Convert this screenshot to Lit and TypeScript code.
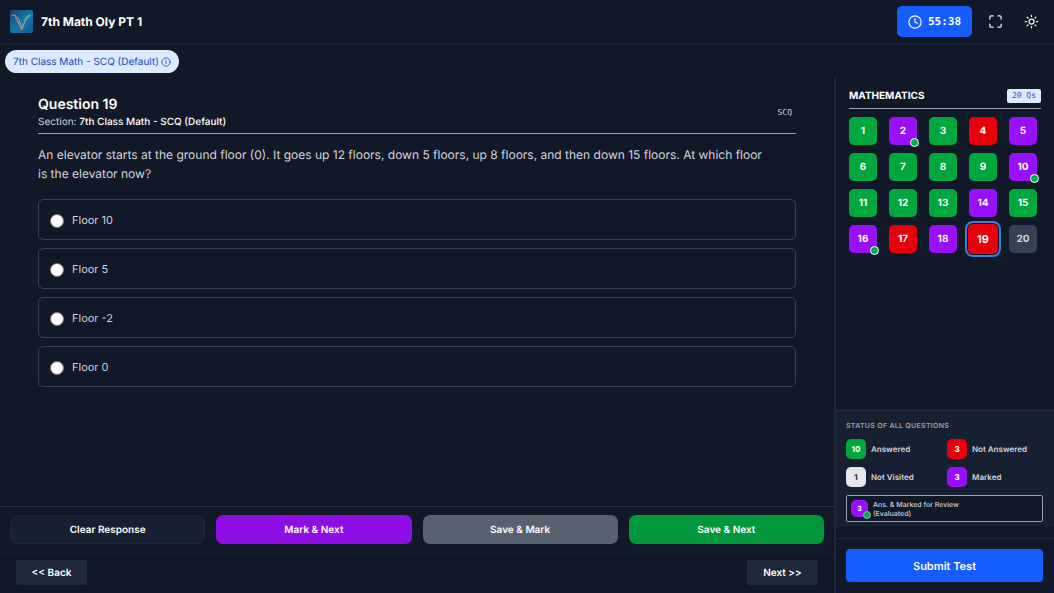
import { LitElement, html, css, nothing } from "lit";
import { customElement, property, state } from "lit/decorators.js";
import { classMap } from "lit/directives/class-map.js";

type Status = "answered" | "skipped" | "marked" | "both" | "unseen";

const STATUSES: Status[] = [
  "answered", "both", "answered", "skipped", "marked",
  "answered", "answered", "answered", "answered", "both",
  "answered", "answered", "answered", "marked", "answered",
  "both", "skipped", "marked", "skipped", "unseen",
];

const OPTIONS = ["Floor 10", "Floor 5", "Floor -2", "Floor 0"];

const controls = css`
  :host {
    box-sizing: border-box;
  }
  *,
  *::before,
  *::after {
    box-sizing: border-box;
  }
  button {
    font: inherit;
    color: inherit;
    text-rendering: inherit;
    border: 0;
    padding: 0;
    margin: 0;
    background: none;
    cursor: pointer;
  }
  h1, h2, h3, p, ul {
    margin: 0;
    padding: 0;
    font-weight: inherit;
    font-size: inherit;
    list-style: none;
  }
  svg {
    display: block;
    fill: none;
    stroke: currentColor;
    stroke-width: 2;
    stroke-linecap: round;
    stroke-linejoin: round;
  }
`;

@customElement("exam-header")
class ExamHeader extends LitElement {
  @property() heading = "";
  @property() time = "";

  static styles = [
    controls,
    css`
      :host {
        display: flex;
        align-items: center;
        height: 44px;
        padding: 0 14px 0 10px;
        border-bottom: 1px solid #1a2332;
      }
      .logo {
        width: 23px;
        height: 23px;
        margin-right: 8px;
      }
      h1 {
        flex: 1;
        font-size: 12px;
        font-weight: 700;
        color: #ffffff;
      }
      .tools {
        display: flex;
        align-items: center;
      }
      .timer {
        display: flex;
        align-items: center;
        justify-content: center;
        gap: 6px;
        width: 75px;
        height: 31px;
        border-radius: 5px;
        background: #155dfc;
        color: #ffffff;
        font: 700 11px "DejaVu Sans Mono", monospace;
      }
      .icon {
        display: grid;
        place-items: center;
        width: 36px;
        height: 30px;
        color: #f3f4f6;
      }
      .icons {
        display: flex;
        margin: 0 -9px 0 5px;
      }
    `,
  ];

  render() {
    return html`
      <svg class="logo" viewBox="0 0 24 24" aria-hidden="true">
        <defs>
          <linearGradient id="tile" x1="0" y1="0" x2="1" y2="1">
            <stop offset="0" stop-color="#12466f" />
            <stop offset="0.55" stop-color="#1678ae" />
            <stop offset="1" stop-color="#0c5688" />
          </linearGradient>
        </defs>
        <rect width="24" height="24" rx="2" fill="url(#tile)" stroke="none" />
        <path d="M2 5.500h3l6.600 14.500" stroke="#b99a6c" stroke-width="1" />
        <path d="M5.500 5l6.800 15" stroke="#c46a84" stroke-width="1" />
        <path d="M8.500 8l3.800 9" stroke="#7fb0c6" stroke-width="0.9" />
        <path d="M12.300 20L17 8.500l4.500-3" stroke="#35a9c4" stroke-width="1.600" />
        <path d="M12 21l3.600-9.500 3.200-4" stroke="#d08a60" stroke-width="1" />
        <path d="M15 11.500l2-4 3.500-2.500" stroke="#3fae9c" stroke-width="1.400" />
      </svg>
      <h1>${this.heading}</h1>
      <div class="tools">
        <div class="timer" role="timer">
          <svg width="14" height="14" viewBox="0 0 24 24" aria-hidden="true">
            <circle cx="12" cy="12" r="10.500" />
            <path d="M12 6v6l4 2" />
          </svg>
          <span>${this.time}</span>
        </div>
        <div class="icons">
          <button class="icon" aria-label="Full screen">
            <svg width="15" height="15" viewBox="0 0 24 24" aria-hidden="true">
              <path d="M8 3H5a2 2 0 0 0-2 2v3M21 8V5a2 2 0 0 0-2-2h-3M3 16v3a2 2 0 0 0 2 2h3M16 21h3a2 2 0 0 0 2-2v-3" />
            </svg>
          </button>
          <button class="icon" aria-label="Light theme">
            <svg width="15" height="15" viewBox="0 0 24 24" aria-hidden="true">
              <circle cx="12" cy="12" r="4" />
              <path d="M12 2v2M12 20v2M4.930 4.930l1.410 1.410M17.660 17.660l1.410 1.410M2 12h2M20 12h2M6.340 17.660l-1.410 1.410M19.070 4.930l-1.410 1.410" />
            </svg>
          </button>
        </div>
      </div>
    `;
  }
}

@customElement("question-view")
class QuestionView extends LitElement {
  @property({ type: Number }) number = 0;
  @property() section = "";
  @property() text = "";
  @property({ type: Array }) options: string[] = [];

  static styles = [
    controls,
    css`
      :host {
        display: block;
        padding: 16px 38px;
      }
      header {
        display: flex;
        justify-content: space-between;
        align-items: center;
        height: 40px;
        border-bottom: 1px solid #99a1af;
      }
      h2 {
        font-size: 14px;
        line-height: 20px;
        font-weight: 600;
        color: #ffffff;
      }
      .section {
        font-size: 10px;
        line-height: 14px;
        color: #d1d5dc;
        padding-bottom: 4px;
      }
      .section strong {
        font-weight: 500;
        color: #ffffff;
      }
      .kind {
        padding: 0 4px 2px;
        font: 8px "DejaVu Sans Mono", monospace;
        color: #d1d5dc;
      }
      fieldset {
        border: 0;
        margin: 0;
        padding: 0;
        min-width: 0;
      }
      legend {
        padding: 11px 30px 16px 0;
        font-size: 12px;
        line-height: 19px;
        color: #d1d5dc;
      }
      .options {
        display: grid;
        gap: 8px;
      }
      label {
        display: flex;
        align-items: center;
        gap: 8px;
        height: 41px;
        padding: 0 11px;
        border: 1px solid #364153;
        border-radius: 5px;
        font-size: 11px;
        color: #d1d5dc;
        cursor: pointer;
      }
      input {
        appearance: none;
        width: 14px;
        height: 14px;
        margin: 3px 0 0;
        border: 1px solid #767676;
        border-radius: 50%;
        background: #ffffff;
      }
      input:checked {
        border: 4px solid #155dfc;
      }
    `,
  ];

  render() {
    return html`
      <header>
        <div>
          <h2>Question ${this.number}</h2>
          <p class="section">Section: <strong>${this.section}</strong></p>
        </div>
        <span class="kind">SCQ</span>
      </header>
      <fieldset>
        <legend>${this.text}</legend>
        <div class="options">
          ${this.options.map(
            (option, i) => html`
              <label for="option-${i}">
                <input type="radio" name="answer" id="option-${i}" />
                <span>${option}</span>
              </label>
            `
          )}
        </div>
      </fieldset>
    `;
  }
}

@customElement("exam-actions")
class ExamActions extends LitElement {
  static styles = [
    controls,
    css`
      :host {
        display: block;
        border-top: 1px solid #27303f;
        color: #ffffff;
      }
      .main {
        display: grid;
        grid-template-columns: repeat(4, 1fr);
        gap: 11px;
        padding: 8px 10px;
        font-size: 10px;
        font-weight: 600;
      }
      .main button {
        height: 29px;
        border-radius: 7px;
      }
      .main .clear {
        background: #172030;
        border: 1px solid #1e2939;
      }
      .main .mark {
        background: #8d0fe6;
      }
      .main .save-mark {
        background: #586170;
      }
      .main .save {
        background: #02973b;
      }
      .nav {
        display: flex;
        justify-content: space-between;
        padding: 7px 16px 8px;
        border-top: 1px solid #161f2e;
        font-size: 10px;
        font-weight: 600;
      }
      .nav button {
        width: 71px;
        height: 25px;
        border-radius: 2px;
        background: #1e2939;
      }
    `,
  ];

  render() {
    return html`
      <div class="main">
        <button class="clear">Clear Response</button>
        <button class="mark">Mark &amp; Next</button>
        <button class="save-mark">Save &amp; Mark</button>
        <button class="save">Save &amp; Next</button>
      </div>
      <nav class="nav">
        <button>&lt;&lt; Back</button>
        <button>Next &gt;&gt;</button>
      </nav>
    `;
  }
}

@customElement("question-palette")
class QuestionPalette extends LitElement {
  @property({ type: Array }) statuses: Status[] = [];
  @property({ type: Number }) current = 0;

  static styles = [
    controls,
    css`
      :host {
        display: flex;
        flex-direction: column;
        border-left: 2px solid #1e2939;
        color: #ffffff;
      }
      .list {
        flex: 1;
        min-height: 0;
        padding: 10px 13px 0;
      }
      .title {
        display: flex;
        align-items: center;
        justify-content: space-between;
        padding-bottom: 4px;
        margin-bottom: 8px;
        border-bottom: 1px solid #99a1af;
      }
      .title h2 {
        font-size: 10px;
        line-height: 16px;
        font-weight: 700;
      }
      .count {
        padding: 0 5px;
        border-radius: 2px;
        background: #dbeafe;
        color: #3650a8;
        font: 8px/14px "DejaVu Sans Mono", monospace;
      }
      .grid {
        display: grid;
        grid-template-columns: repeat(5, 1fr);
        gap: 8px;
      }
      .tile {
        position: relative;
        display: grid;
        place-items: center;
        width: 28px;
        height: 28px;
        border-radius: 5px;
        font-size: 10px;
        font-weight: 700;
      }
      .answered {
        background: #00a63e;
      }
      .skipped {
        background: #e7000b;
      }
      .marked,
      .both {
        background: #9810fa;
      }
      .unseen {
        background: #364153;
        color: #d1d5dc;
      }
      .current {
        width: 30px;
        height: 30px;
        margin: -1px;
        font-size: 11px;
        outline: 2px solid #3b7dd8;
        outline-offset: 1px;
      }
      .both::after {
        content: "";
        position: absolute;
        right: -2px;
        bottom: -2px;
        width: 9px;
        height: 9px;
        border: 1px solid #ffffff;
        border-radius: 50%;
        background: #00b050;
      }
      .status {
        padding: 9px 11px 5px 10px;
        border-top: 1px solid #27303f;
        background: #172030;
      }
      .status h3 {
        font-size: 7px;
        line-height: 12px;
        font-weight: 600;
        letter-spacing: 0.3px;
        color: #99a1af;
        margin-bottom: 7px;
      }
      .legend {
        display: grid;
        grid-template-columns: 1fr 1fr;
        gap: 8px 5px;
        margin-bottom: 8px;
      }
      .legend li {
        display: flex;
        align-items: center;
        gap: 5px;
        font-size: 8px;
        font-weight: 600;
        color: #d1d5dc;
      }
      .badge {
        position: relative;
        display: grid;
        place-items: center;
        flex: none;
        width: 20px;
        height: 20px;
        border-radius: 5px;
        font-size: 8px;
        font-weight: 700;
        color: #ffffff;
      }
      .badge.blank {
        background: #e5e7eb;
        color: #1e2939;
      }
      .review {
        display: flex;
        align-items: center;
        gap: 5px;
        height: 27px;
        padding: 0 4px;
        border: 1px solid #99a1af;
        border-radius: 2px;
        background: #111827;
        font-size: 7px;
        line-height: 9px;
        font-weight: 500;
        color: #d1d5dc;
      }
      .review .badge {
        width: 17px;
        height: 17px;
        font-size: 7px;
      }
      .review .badge::after {
        right: -3px;
        width: 8px;
        height: 8px;
        border-color: #99a1af;
      }
      .submit {
        margin-top: 11px;
        padding: 10px 11px 11px 10px;
        border-top: 1px solid #1e2939;
      }
      .submit button {
        width: 100%;
        height: 33px;
        border-radius: 4px;
        background: #155dfc;
        font-size: 11px;
        font-weight: 600;
      }
    `,
  ];

  render() {
    return html`
      <section class="list">
        <div class="title">
          <h2>MATHEMATICS</h2>
          <span class="count">${this.statuses.length} Qs</span>
        </div>
        <div class="grid">
          ${this.statuses.map((status, i) => {
            const isCurrent = i + 1 === this.current;
            return html`
              <button
                class=${classMap({ tile: true, [status]: true, current: isCurrent })}
                aria-current=${isCurrent ? "true" : nothing}
                @click=${() => this.dispatchEvent(new CustomEvent("pick", { detail: i + 1 }))}
              >${i + 1}</button>
            `;
          })}
        </div>
      </section>
      <section class="status">
        <h3>STATUS OF ALL QUESTIONS</h3>
        <ul class="legend">
          <li><span class="badge answered">10</span>Answered</li>
          <li><span class="badge skipped">3</span>Not Answered</li>
          <li><span class="badge blank">1</span>Not Visited</li>
          <li><span class="badge marked">3</span>Marked</li>
        </ul>
        <div class="review">
          <span class="badge both">3</span>
          <span>Ans. &amp; Marked for Review<br />(Evaluated)</span>
        </div>
      </section>
      <div class="submit"><button>Submit Test</button></div>
    `;
  }
}

@customElement("app-root")
class AppRoot extends LitElement {
  @state() private current = 19;

  static styles = [
    controls,
    css`
      :host {
        display: flex;
        flex-direction: column;
        min-height: 100vh;
        background: #111827;
        font-family: Inter, "Liberation Sans", sans-serif;
        text-rendering: geometricPrecision;
      }
      .sections {
        display: flex;
        padding: 6px 5px 5px;
      }
      .section {
        display: flex;
        align-items: center;
        gap: 2px;
        height: 23px;
        padding: 0 8px;
        border-radius: 12px;
        background: #dbeafe;
        color: #1d49b8;
        font-size: 10px;
        font-weight: 400;
      }
      .body {
        flex: 1;
        display: grid;
        grid-template-columns: minmax(0, 1fr) 220px;
      }
      main {
        display: flex;
        flex-direction: column;
      }
      question-view {
        flex: 1;
      }
    `,
  ];

  render() {
    return html`
      <exam-header heading="7th Math Oly PT 1" time="55:38"></exam-header>
      <nav class="sections">
        <button class="section">
          7th Class Math - SCQ (Default)
          <svg width="10" height="10" viewBox="0 0 24 24" aria-hidden="true">
            <circle cx="12" cy="12" r="10" />
            <path d="M12 16v-5M12 7.500v0.500" />
          </svg>
        </button>
      </nav>
      <div class="body">
        <main>
          <question-view
            number=${this.current}
            section="7th Class Math - SCQ (Default)"
            text="An elevator starts at the ground floor (0). It goes up 12 floors, down 5 floors, up 8 floors, and then down 15 floors. At which floor is the elevator now?"
            .options=${OPTIONS}
          ></question-view>
          <exam-actions></exam-actions>
        </main>
        <question-palette
          .statuses=${STATUSES}
          current=${this.current}
          @pick=${(e: CustomEvent<number>) => (this.current = e.detail)}
        ></question-palette>
      </div>
    `;
  }
}
